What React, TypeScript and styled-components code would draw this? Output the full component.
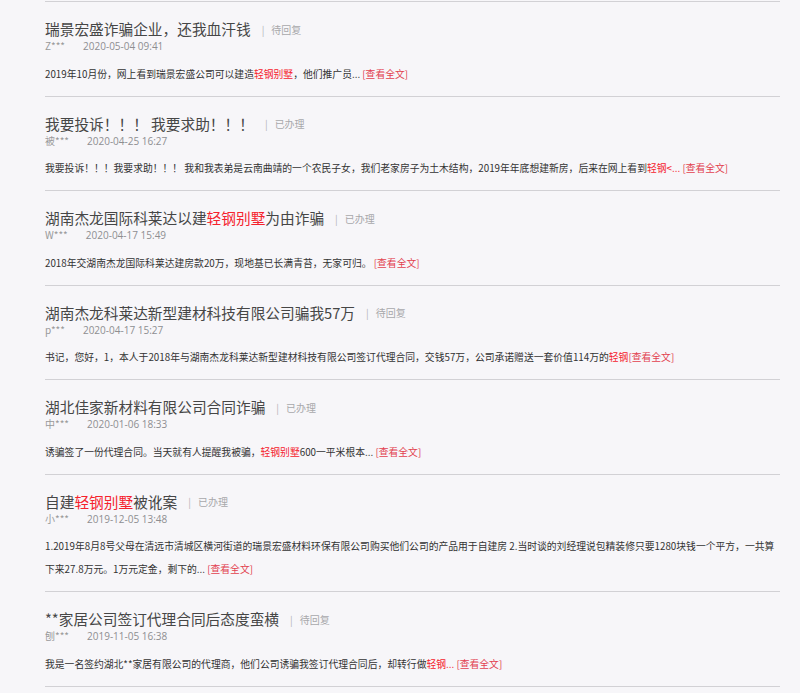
import styled, { createGlobalStyle } from "styled-components"

type Complaint = {
  title: string
  status: string
  author: string
  date: string
  summary: string
}

// text inside {braces} is the highlighted keyword
const complaints: Complaint[] = [
  {
    title: "瑞景宏盛诈骗企业，还我血汗钱",
    status: "待回复",
    author: "Z***",
    date: "2020-05-04 09:41",
    summary: "2019年10月份，网上看到瑞景宏盛公司可以建造{轻钢别墅}，他们推广员... ",
  },
  {
    title: "我要投诉！！！ 我要求助！！！",
    status: "已办理",
    author: "被***",
    date: "2020-04-25 16:27",
    summary:
      "我要投诉！！！我要求助！！！ 我和我表弟是云南曲靖的一个农民子女，我们老家房子为土木结构，2019年年底想建新房，后来在网上看到{轻钢<...} ",
  },
  {
    title: "湖南杰龙国际科莱达以建{轻钢别墅}为由诈骗",
    status: "已办理",
    author: "W***",
    date: "2020-04-17 15:49",
    summary: "2018年交湖南杰龙国际科莱达建房款20万，现地基已长满青苔，无家可归。 ",
  },
  {
    title: "湖南杰龙科莱达新型建材科技有限公司骗我57万",
    status: "待回复",
    author: "p***",
    date: "2020-04-17 15:27",
    summary:
      "书记，您好，1，本人于2018年与湖南杰龙科莱达新型建材科技有限公司签订代理合同，交钱57万，公司承诺赠送一套价值114万的{轻钢}",
  },
  {
    title: "湖北佳家新材料有限公司合同诈骗",
    status: "已办理",
    author: "中***",
    date: "2020-01-06 18:33",
    summary: "诱骗签了一份代理合同。当天就有人提醒我被骗，{轻钢别墅}600一平米根本... ",
  },
  {
    title: "自建{轻钢别墅}被讹案",
    status: "已办理",
    author: "小***",
    date: "2019-12-05 13:48",
    summary:
      "1.2019年8月8号父母在清远市清城区横河街道的瑞景宏盛材料环保有限公司购买他们公司的产品用于自建房 2.当时谈的刘经理说包精装修只要1280块钱一个平方，一共算下来27.8万元。1万元定金，剩下的... ",
  },
  {
    title: "**家居公司签订代理合同后态度蛮横",
    status: "待回复",
    author: "刨***",
    date: "2019-11-05 16:38",
    summary: "我是一名签约湖北**家居有限公司的代理商，他们公司诱骗我签订代理合同后，却转行做{轻钢...} ",
  },
]

function Marked({ text }: { text: string }) {
  return (
    <>
      {text.split(/(\{[^}]*\})/).map((part, i) =>
        part.startsWith("{") ? <Keyword key={i}>{part.slice(1, -1)}</Keyword> : part
      )}
    </>
  )
}

export default function App() {
  return (
    <>
      <GlobalStyle />
      <Page>
        <List>
          {complaints.map((item, index) => (
            <Item key={`complaint-${index}`}>
              <TitleRow>
                <Title>
                  <Marked text={item.title} />
                </Title>
                <Divider>|</Divider>
                <Status>{item.status}</Status>
              </TitleRow>
              <Meta>
                <Author>{item.author}</Author>
                <Date>{item.date}</Date>
              </Meta>
              <Summary>
                <Marked text={item.summary} />
                <More href="#">[查看全文]</More>
              </Summary>
            </Item>
          ))}
        </List>
      </Page>
    </>
  )
}

const GlobalStyle = createGlobalStyle`
  html, body {
    margin: 0;
    padding: 0;
    background: #f7f6f9;
  }

  body {
    font-family: "Noto Sans CJK SC", "Noto Sans", sans-serif;
    color: #333;
  }
`

const Page = styled.div`
  padding: 1px 20px 0 45px;
`

const List = styled.ul`
  width: 735px;
  margin: 0;
  padding: 0;
  list-style: none;
  border-top: 1px solid #d2d1d5;
`

const Item = styled.li`
  padding: 17px 0 10px;
  border-bottom: 1px solid #d2d1d5;
`

const TitleRow = styled.div`
  display: flex;
  align-items: center;
  height: 20px;
`

const Title = styled.h3`
  margin: 0;
  font-size: 14.7px;
  font-weight: 400;
  line-height: 20px;
  color: #464646;
`

const Divider = styled.span`
  margin-left: 11px;
  font-size: 10px;
  color: #b5b5b8;
`

const Status = styled.span`
  margin-left: 7px;
  font-size: 10px;
  color: #a8a8ab;
`

const Meta = styled.div`
  display: flex;
  height: 14px;
  line-height: 14px;
  font-size: 10px;
  color: #999;
`

const Author = styled.span`
  margin-right: 18px;
`

const Date = styled.span`
  font-family: "Open Sans", "Noto Sans", sans-serif;
  font-size: 10px;
  color: #8e8e91;
`

const Summary = styled.p`
  margin: 9.5px 0 0;
  font-size: 9.8px;
  line-height: 23px;
  color: #333;
`

const Keyword = styled.span`
  color: #f5222d;
`

const More = styled.a`
  color: #e2404e;
  text-decoration: none;
`
